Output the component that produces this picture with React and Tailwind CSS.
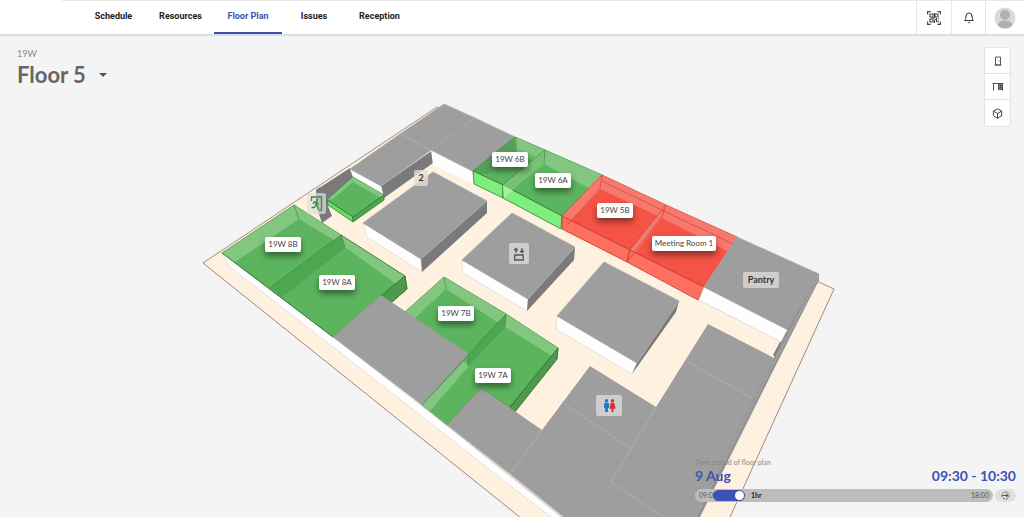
import { FiBell, FiBox } from "react-icons/fi";
import { FaMale, FaFemale } from "react-icons/fa";

const navItems = [
	{ label: "Schedule", width: "w-[67px]" },
	{ label: "Resources", width: "w-[67px]" },
	{ label: "Floor Plan", width: "w-[68px]", active: true },
	{ label: "Issues", width: "w-[64px]" },
	{ label: "Reception", width: "w-[67px]" },
];

const GREY = "#9e9e9e";
const WHITE = "#fefefe";
const DARK = "#7a7a7a";
const FLOOR = "#5cb55e";
const WALL = "#82c67f";
const DEEP = "#4da750";
const EDGE = "#2c7d30";
const RED = "#f55346";
const RED_WALL = "#f6796e";
const RED_FRONT = "#ff6f5f";
const RED_EDGE = "#c2352c";

// walls and roofs, back to front
const shapes = [
	// slab
	{ p: "203,263 437,107 834,289 700,583 602,583", f: "#fff1df", s: "#8d6e63" },
	// north west block
	{ p: "316,190 350,168 355,181 384,199 328,206", f: DARK },
	{ p: "381,186 433,150 433,163 384,198", f: DARK },
	{ p: "350,169 381,186 384,198 354,180", f: WHITE },
	{ p: "350,169 400,134 444,104 475,118 431,150 381,186", f: GREY, s: "#a8a8a8" },
	{ p: "431,150 474,172 474,184 433,165", f: WHITE },
	{ p: "431,150 475,118 515,137 474,172", f: GREY, s: "#a8a8a8" },
	{ p: "316,190 320,187 332,216 322,223 316,205", f: DARK },
	// small green room
	{ p: "327,200 353,177 384,195 353,217", f: FLOOR, s: EDGE },
	{ p: "327,200 353,177 384,195 381,198 353,182 333,199", f: WALL },
	{ p: "327,200 353,217 353,222 328,205", f: "#65df68", s: EDGE },
	{ p: "353,217 384,195 384,200 353,222", f: DEEP, s: EDGE },
	// 6B and 6A
	{ p: "473,171 515,137 545,150 503,185", f: FLOOR, s: EDGE },
	{ p: "473,171 515,137 516,151 488,174 480,174", f: "#57a059" },
	{ p: "515,137 545,150 544,161 516,148", f: WALL },
	{ p: "515,148 544,162 544,166 516,152", f: "#6fbc6e" },
	{ p: "503,185 545,150 602,175 562,216", f: FLOOR, s: EDGE },
	{ p: "503,185 545,150 544,164 512,190", f: "#79c177" },
	{ p: "545,150 602,175 592,190 544,164", f: WALL },
	{ p: "473,171 503,185 503,198 474,184", f: "#7eee7e", s: EDGE },
	{ p: "503,185 562,216 561,229 503,198", f: "#7eee7e", s: EDGE },
	{ p: "503,185 513,190 504,198", f: "#a4f09c" },
	// 5B and meeting room 1
	{ p: "562,216 602,175 666,205 630,250", f: RED, s: RED_EDGE },
	{ p: "602,175 666,205 660,217 600,189", f: RED_WALL },
	{ p: "562,216 602,175 601,189 568,224", f: RED_WALL },
	{ p: "630,250 666,205 737,237 704,287", f: RED, s: RED_EDGE },
	{ p: "666,205 737,237 729,252 662,218", f: RED_WALL },
	{ p: "630,250 666,205 662,218 634,255", f: RED_WALL },
	{ p: "562,216 630,250 627,262 562,229", f: RED_FRONT, s: RED_EDGE },
	{ p: "630,250 704,287 698,300 627,262", f: RED_FRONT, s: RED_EDGE },
	// pantry
	{ p: "788,330 819,274 819,280 776,358 773,355 780,342", f: DARK },
	{ p: "704,287 788,330 781,342 699,300", f: WHITE, s: "#d8d8d8" },
	{ p: "737,237 819,274 788,330 704,287", f: GREY, s: "#a8a8a8" },
	// centre blocks
	{ p: "363,223 421,259 422,272 367,237", f: WHITE, s: "#ddd" },
	{ p: "421,259 487,201 487,213 422,272", f: DARK },
	{ p: "363,223 433,172 487,201 421,259", f: GREY, s: "#a8a8a8" },
	{ p: "462,260 528,299 527,311 463,273", f: WHITE, s: "#ddd" },
	{ p: "528,299 575,247 574,260 527,311", f: DARK },
	{ p: "462,260 512,213 575,247 528,299", f: GREY, s: "#a8a8a8" },
	{ p: "557,316 637,363 632,374 556,329", f: WHITE, s: "#ddd" },
	{ p: "637,363 679,301 676,312 632,374", f: DARK },
	{ p: "557,316 604,262 679,301 637,363", f: GREY, s: "#a8a8a8" },
	// south west outer wall
	{ p: "222,253 333,337 433,415 500,468 576,527 564,527 503,480 424,418 315,333 230,267", f: WHITE, s: "#ddd" },
	// 8B and 8A
	{ p: "222,253 294,205 341,235 405,276 407,289 392,302 381,296 333,337", f: FLOOR, s: EDGE },
	{ p: "222,253 294,205 299,219 235,262", f: WALL },
	{ p: "294,205 341,235 345,247 299,219", f: WALL },
	{ p: "341,235 405,276 399,286 345,247", f: WALL },
	{ p: "270,288 341,235 345,248 282,297", f: DEEP },
	{ p: "381,296 405,276 407,289 392,302", f: "#50984f", s: EDGE },
	// 7B and 7A
	{ p: "405,312 444,277 506,314 558,348 557,359 515,411 481,388 447,425 422,405 468,355", f: FLOOR, s: EDGE },
	{ p: "405,312 444,277 446,289 415,318", f: WALL },
	{ p: "444,277 506,314 505,327 446,289", f: WALL },
	{ p: "506,314 558,348 555,358 505,327", f: WALL },
	{ p: "468,355 506,314 505,328 468,366", f: DEEP },
	{ p: "422,405 464,361 469,366 430,411", f: WALL },
	{ p: "510,407 558,348 557,359 515,412", f: "#50984f", s: EDGE },
	// south roofs
	{ p: "333,337 381,295 469,354 422,405", f: GREY },
	{ p: "447,425 481,388 542,430 590,366 656,407 708,324 774,358 692,527 576,527 510,474", f: GREY },
	{ p: "774,358 785,334 819,274 819,280 776,365 695,527 690,527", f: "#929292" },
];

const seams = [
	"400,134 431,150",
	"510,474 542,430",
	"562,402 630,448",
	"656,407 611,482 663,517",
	"686,361 752,398",
	"694,520 775,361 819,276",
	"333,337 422,405 447,425 564,519",
];

const edges = [
	"270,288 341,235 345,247",
	"294,205 299,219",
	"222,253 333,337",
	"341,235 405,276 381,296",
	"468,355 506,314 505,327",
	"444,277 446,289",
	"516,137 516,152",
	"545,150 544,164",
	"510,407 558,348",
	"422,405 468,355 468,366",
];

const redEdges = ["602,175 600,189 568,224", "666,205 661,218 627,262", "602,181 664,211 733,244"];

const rooms = [
	{ name: "19W 6B", at: "left-[492px] top-[152px]" },
	{ name: "19W 6A", at: "left-[535px] top-[173px]" },
	{ name: "19W 5B", at: "left-[597px] top-[203px]" },
	{ name: "Meeting Room 1", at: "left-[652px] top-[236px]", wide: true },
	{ name: "19W 8B", at: "left-[265px] top-[237px]" },
	{ name: "19W 8A", at: "left-[319px] top-[275px]" },
	{ name: "19W 7B", at: "left-[438px] top-[306px]" },
	{ name: "19W 7A", at: "left-[475px] top-[368px]" },
];

function QrIcon() {
	return (
		<svg width="14" height="14" viewBox="0 0 14 14" fill="none" stroke="#444" strokeWidth="1.1">
			<path d="M.6 3.600v-3h3M10.400.6h3v3M13.400 10.400v3h-3M3.600 13.400h-3v-3" />
			<path d="M3 3h3v3H3zM3 8h3v3H3zM8 3h3v3H8z" />
			<path d="M4.500 7h3M7.500 2v5.500M8 8.500h1.500M9.500 7v4M11.500 7.500v1M11 9.500v2M7.500 9v3" />
		</svg>
	);
}

function DoorIcon() {
	return (
		<svg width="8" height="10" viewBox="0 0 8 10" fill="none" stroke="#555">
			<path d="M1.500 1h5v8h-5zM.5 9h7" />
			<path d="M5 4.500v1" />
		</svg>
	);
}

function DeskIcon() {
	return (
		<svg width="12" height="10" viewBox="0 0 12 10" fill="none" stroke="#555">
			<path d="M.5 1.500h11M1.500 1.500v7M6.500 1.500v6h4v-6M10.500 7v1.500" />
			<path d="M7 2h3v5H7z" fill="#777" stroke="none" />
			<path d="M8 3.500h1.500M8 5.500h1.500" stroke="#444" />
		</svg>
	);
}

function ExitIcon() {
	return (
		<svg width="13" height="15" viewBox="0 0 13 15" fill="none" stroke="#388e3c" strokeWidth="1.300">
			<path d="M1.500 5V1h10v13H9" />
			<circle cx="7" cy="3.900" r="1.200" fill="#388e3c" stroke="none" />
			<path d="M6.500 5.500L5.800 9" strokeWidth="2" />
			<path d="M3 8l1-2h2.500l1 1.800 1.700.4M5.800 9l2 1.600.2 3M5.600 9.500L4.500 11.500H1.500" />
		</svg>
	);
}

function LiftIcon() {
	return (
		<svg width="14" height="14" viewBox="0 0 14 14" fill="none" stroke="#555" strokeWidth="1.300">
			<path d="M2.700 8h8.500v5H2.700z" />
			<path d="M4 6V1.500M2.200 3.200L4 1.500l1.800 1.700M10 1v4.500M8.200 3.800L10 5.500l1.800-1.700" />
		</svg>
	);
}

function Plan() {
	return (
		<div className="absolute left-0 top-0">
			<svg width="1024" height="517" viewBox="0 0 1024 517" aria-hidden="true">
				{shapes.map((s, i) => (
					<polygon key={i} points={s.p} fill={s.f} stroke={s.s || "none"} strokeWidth="0.8" />
				))}
				{seams.map((p) => (
					<polyline key={p} points={p} fill="none" stroke="#b3b3b3" strokeWidth="0.8" />
				))}
				{edges.map((p) => (
					<polyline key={p} points={p} fill="none" stroke={EDGE} strokeWidth="0.7" opacity="0.7" />
				))}
				{redEdges.map((p) => (
					<polyline key={p} points={p} fill="none" stroke={RED_EDGE} strokeWidth="0.7" opacity="0.8" />
				))}
			</svg>
			{rooms.map((room) => (
				<button
					key={room.name}
					type="button"
					className={`absolute h-[15px] rounded-xs bg-white text-center text-[8px] leading-[15px] whitespace-nowrap text-[#444] shadow-[0_4px_6px_rgba(0,0,0,0.45)] ${room.at} ${room.wide ? "w-16" : "w-9"}`}
				>
					{room.name}
				</button>
			))}
			<span className="absolute left-[414px] top-[170px] h-4 w-[14px] rounded-xs bg-[#e2dfda]/80 text-center text-[9px] font-bold leading-4 text-[#333]">2</span>
			<span className="absolute left-[743px] top-[272px] h-4 w-9 rounded-xs bg-[#cecece] text-center text-[9px] font-bold leading-4 text-[#333]">Pantry</span>
			<span className="absolute left-[307px] top-[193px] flex h-[21px] w-[19px] items-center justify-center rounded-xs bg-[#dedede]/70">
				<ExitIcon />
			</span>
			<span className="absolute left-[509px] top-[243px] flex h-[21px] w-5 items-center justify-center rounded-xs bg-[#cecece]">
				<LiftIcon />
			</span>
			<span className="absolute left-[596px] top-[395px] flex h-[21px] w-[26px] items-center justify-center rounded-xs bg-[#cecece]">
				<svg width="14" height="14" viewBox="0 0 14 14">
					<FaMale x="-2" y="0" size={13} color="#1976d2" />
					<FaFemale x="4" y="0" size={13} color="#d32f2f" />
				</svg>
			</span>
		</div>
	);
}

function Header() {
	return (
		<header className="relative z-10 flex h-[35px] border-b border-[#dadada] bg-white shadow-[0_1px_1px_rgba(0,0,0,0.08)]">
			<nav className="ml-[62px] flex flex-1 border-t border-[#e8e8e8] pl-[18px] font-['Roboto',sans-serif]">
				{navItems.map((item) => (
					<a
						key={item.label}
						href="#"
						className={`flex items-center justify-center border-b-2 text-[9px] font-bold ${item.width} ${
							item.active ? "border-[#3f51b5] text-[#3f51b5]" : "border-transparent text-[#222]"
						}`}
					>
						{item.label}
					</a>
				))}
			</nav>
			<div className="flex border-t border-[#e8e8e8]">
				<button type="button" aria-label="Scan code" className="flex w-[35px] items-center justify-center border-l border-[#e6e6e6]">
					<QrIcon />
				</button>
				<button type="button" aria-label="Notifications" className="flex w-[34px] items-center justify-center border-l border-[#e6e6e6]">
					<FiBell size={12} color="#333" />
				</button>
				<button type="button" aria-label="Account" className="flex w-[39px] items-center justify-center border-l border-[#e6e6e6]">
					<svg width="22" height="22" viewBox="0 0 22 22">
						<clipPath id="avatar">
							<circle cx="11" cy="11" r="10.500" />
						</clipPath>
						<g clipPath="url(#avatar)">
							<path fill="#dadada" d="M0 0h22v22H0z" />
							<circle cx="11" cy="8" r="5" fill="#b0b0b4" />
							<ellipse cx="11" cy="18" rx="7.500" ry="4.500" fill="#b0b0b4" />
						</g>
					</svg>
				</button>
			</div>
		</header>
	);
}

export default function App() {
	return (
		<div className="relative flex min-h-screen flex-col overflow-hidden bg-[#f4f4f4] font-['Lato',sans-serif]">
			<Plan />
			<Header />
			<main className="relative flex flex-1 flex-col justify-between pointer-events-none">
				<div className="flex items-start justify-between pl-[17px] pr-[13px] pt-3">
					<div className="pointer-events-auto text-[#666]">
						<label htmlFor="floor" className="block text-[9px] leading-[14px] text-[#888]">
							19W
						</label>
						<div className="relative">
							<select id="floor" className="w-[94px] appearance-none bg-transparent text-[22px] font-bold leading-7">
								<option>Floor 5</option>
							</select>
							<svg className="pointer-events-none absolute right-1 top-3" width="8" height="4" viewBox="0 0 8 4" fill="#555">
								<path d="M0 0h8L4 4z" />
							</svg>
						</div>
					</div>
					<div className="pointer-events-auto flex w-[27px] flex-col divide-y divide-[#e4e4e4] rounded-xs border border-[#e4e4e4] bg-white">
						<button type="button" aria-label="Rooms" className="flex h-[26px] items-center justify-center">
							<DoorIcon />
						</button>
						<button type="button" aria-label="Desks" className="flex h-[26px] items-center justify-center">
							<DeskIcon />
						</button>
						<button type="button" aria-label="3D view" className="flex h-[26px] items-center justify-center">
							<FiBox size={11} color="#333" />
						</button>
					</div>
				</div>
				<section className="pointer-events-auto w-[329px] self-end pb-[15px] pr-2">
					<label htmlFor="period" className="block text-[7px] leading-[10px] text-[#888]">
						Time period of floor plan
					</label>
					<div className="mb-1 flex justify-between text-[14px] font-bold leading-[18px] text-[#3f51b5]">
						<span>9 Aug</span>
						<span>09:30 - 10:30</span>
					</div>
					<div className="flex gap-[2px]">
						<div className="flex h-[13px] flex-1 items-center rounded-full bg-[#bdbdbd] px-1 text-[7px] text-[#555]">
							<span className="-mr-1">09:00</span>
							<input
								id="period"
								type="range"
								min="0"
								max="60"
								defaultValue="60"
								className="relative h-[11px] w-8 appearance-none rounded-full bg-[#3f51b5] px-px [&::-webkit-slider-thumb]:size-[9px] [&::-webkit-slider-thumb]:appearance-none [&::-webkit-slider-thumb]:rounded-full [&::-webkit-slider-thumb]:bg-white"
							/>
							<span className="ml-[6px] font-bold text-[#222]">1hr</span>
							<span className="ml-auto">18:00</span>
						</div>
						<button type="button" aria-label="Jump to now" className="flex h-[13px] w-[21px] items-center justify-center rounded-full bg-[#e0e0e0]">
							<svg width="9" height="9" viewBox="0 0 9 9" fill="none" stroke="#555">
								<circle cx="4.500" cy="4.500" r="3.500" strokeDasharray="2 1" />
								<path d="M1 4.500h6M5 3l2 1.500L5 6" />
							</svg>
						</button>
					</div>
				</section>
			</main>
		</div>
	);
}
